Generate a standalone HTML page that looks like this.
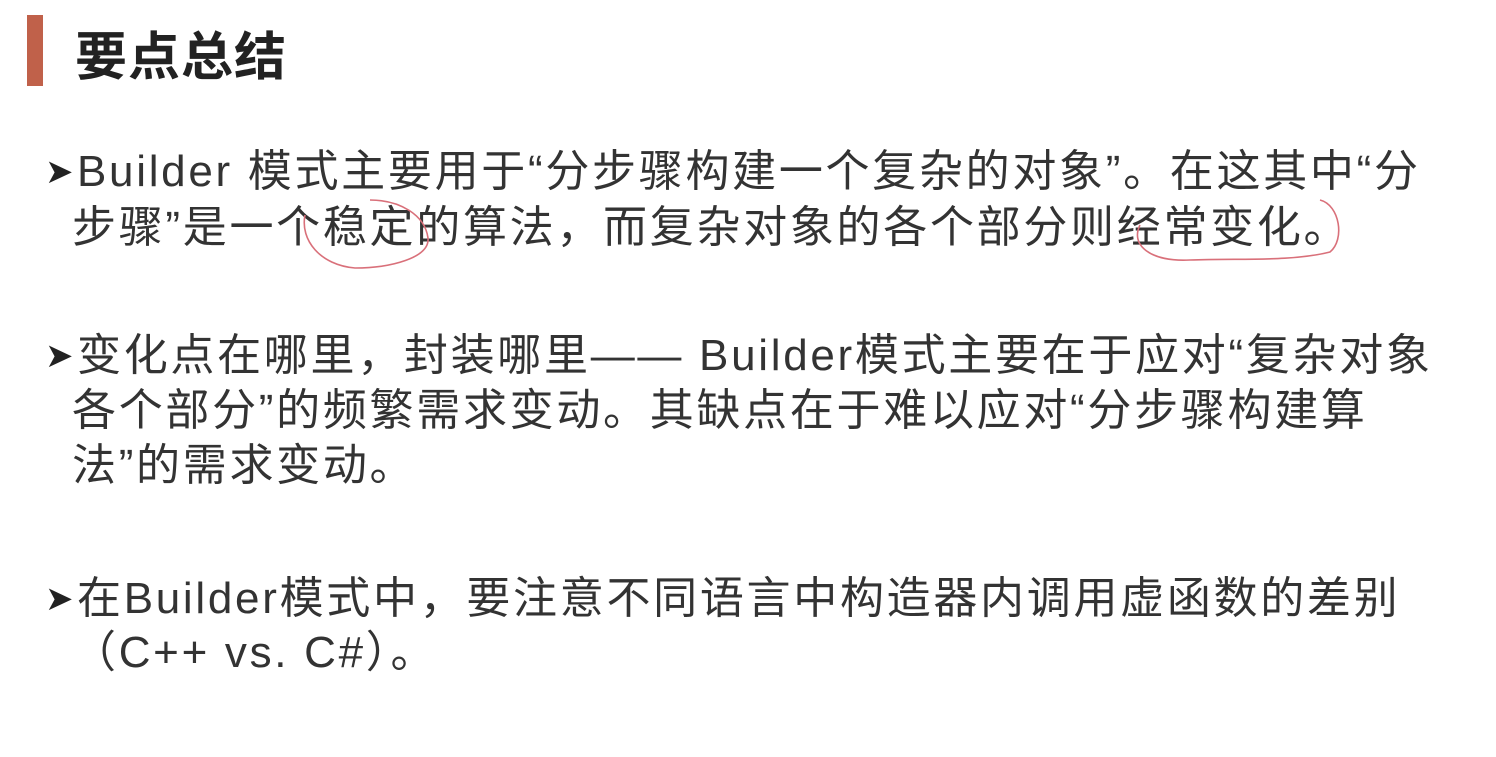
<!DOCTYPE html>
<html><head><meta charset="utf-8"><style>
body{margin:0;width:1496px;height:757px;background:#fff;position:relative;overflow:hidden;font-family:"Liberation Sans","Noto Sans CJK SC",sans-serif;color:#333;}
.bar{position:absolute;left:27px;top:15px;width:16px;height:71px;background:#c0614a;}
.t{position:absolute;left:75px;top:26px;font-size:52px;line-height:64px;color:#222;letter-spacing:1px;font-weight:bold;}
.l{position:absolute;white-space:nowrap;font-size:44px;line-height:56px;letter-spacing:2.7px;}
.a{display:inline-block;width:32px;font-size:34px;vertical-align:3px;letter-spacing:0;color:#222;}
</style></head><body>
<div class="bar"></div>
<div class="t">要点总结</div>
<div class="l" style="left:45px;top:144px"><span class="a">➤</span>Builder 模式主要用于“分步骤构建一个复杂的对象”。在这其中“分</div>
<div class="l" style="left:72px;top:200px">步骤”是一个稳定的算法，而复杂对象的各个部分则经常变化。</div>
<div class="l" style="left:45px;top:328px"><span class="a">➤</span>变化点在哪里，封装哪里—— Builder模式主要在于应对“复杂对象</div>
<div class="l" style="left:72px;top:383px">各个部分”的频繁需求变动。其缺点在于难以应对“分步骤构建算</div>
<div class="l" style="left:72px;top:438px">法”的需求变动。</div>
<div class="l" style="left:45px;top:571px"><span class="a">➤</span>在Builder模式中，要注意不同语言中构造器内调用虚函数的差别</div>
<div class="l" style="left:72px;top:625px">（C++ vs. C#）。</div>
<svg style="position:absolute;left:0;top:0" width="1496" height="757">
<g fill="none" stroke="#d9707a" stroke-width="1.6">
<path d="M305 215 C300 240 320 265 355 268 C390 268 430 258 428 238 C425 215 400 200 370 200"/>
<path d="M1140 225 C1130 245 1150 262 1190 260 C1240 258 1290 262 1330 252 C1345 240 1340 205 1320 200"/>
</g>
</svg>
</body></html>
